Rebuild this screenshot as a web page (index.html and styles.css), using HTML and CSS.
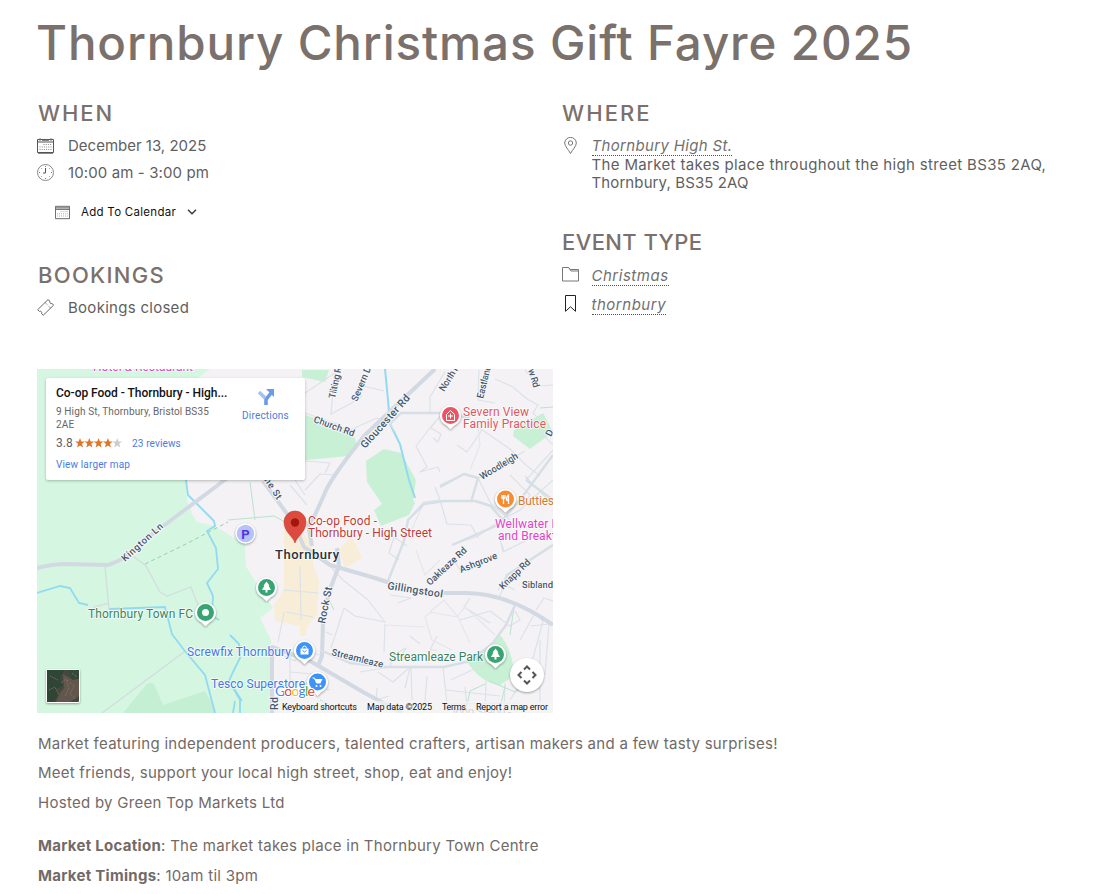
FILE: index.html
```html
<!DOCTYPE html>
<html lang="en">
<head>
<meta charset="utf-8">
<title>Thornbury Christmas Gift Fayre 2025</title>
<link rel="stylesheet" href="styles.css">
</head>
<body>
<main class="event">
  <h1 class="event-title"><span>Thornbury Christmas Gift Fayre 2025</span></h1>
  <div class="event-meta">
    <div class="col">
      <section class="block block-when">
        <h3 class="heading h-when">When</h3>
        <div class="row"><svg class="icon" viewBox="0 0 17 17"><path d="M.5 2.5h16v13H.5zM.5 5h16M1 16.2h15" stroke="#555"/><path d="M3 1v3M14 1v3M5 3.4h7" stroke="#777"/><path d="M6.500 7.500h8M2.500 10h12M2.500 12.500h12" stroke="#888" stroke-dasharray="1 1.200"/></svg><span class="t-date">December 13, 2025</span></div>
        <div class="row row-time"><svg class="icon" viewBox="0 0 17 17"><circle cx="8.500" cy="8.500" r="8" stroke="#888"/><path d="M8.500 4v5H6" stroke="#555"/><path d="M8.500 2v1M8.500 14v1M2 8.500h1M14 8.500h1M4 4l.6.6M13 4l-.6.6M4 13l.6-.6M13 13l-.6-.6" stroke="#777"/></svg><span class="t-time">10:00 am - 3:00 pm</span></div>
        <button class="add-cal"><svg class="icon-sm" viewBox="0 0 17 17"><path d="M.5 1.500h16v14H.5zM.5 5h16" stroke="#555"/><path d="M1 3.200h15" stroke="#999" stroke-width="2"/><path d="M6.500 7.500h8M2.500 10h12M2.500 12.500h12" stroke="#999" stroke-dasharray="1 1.200"/></svg><span class="t-cal">Add To Calendar</span><svg class="chev" viewBox="0 0 10 6"><path d="M1 .8l4 4 4-4" stroke="#333" stroke-width="1.300"/></svg></button>
      </section>
      <section class="block">
        <h3 class="heading h-book">Bookings</h3>
        <div class="row"><svg class="icon" viewBox="0 0 17 17"><path d="M.7 10.700L11 .6l2 1.700c-.6 1.500.6 2.800 2.200 2.200l1.400 1.700L6.200 16.300l-1.600-1.700c.7-1.500-.6-2.900-2.200-2.200zM8.200 3.600l1 1M12 7.500l1.200 1.200M10 5.500l.7.7" stroke="#666"/></svg><span class="t-closed">Bookings closed</span></div>
      </section>
    </div>
    <div class="col col-right">
      <section class="block block-where">
        <h3 class="heading h-where">Where</h3>
        <div class="row row-where"><svg class="icon" viewBox="0 0 17 17"><path d="M8.500 16.500C6.500 12.500 2.700 9.500 2.700 6a5.800 5.600 0 0 1 11.600 0c0 3.500-3.800 6.500-5.800 10.500z" stroke="#777"/><circle cx="8.500" cy="6" r="2.200" stroke="#777"/></svg>
          <div><a class="link t-high">Thornbury High St.</a><br><span class="t-addr">The Market takes place throughout the high street BS35 2AQ,</span><br><span class="t-addr2">Thornbury, BS35 2AQ</span></div></div>
      </section>
      <section class="block">
        <h3 class="heading h-type">Event Type</h3>
        <div class="row row-folder"><svg class="icon icon-folder" viewBox="0 0 17 17"><path d="M.5 1.500h6l2 2h8v11.500H.5zM6.500 1.500l2.500 3.500h7.500" stroke="#777"/></svg><a class="link t-xmas">Christmas</a></div>
        <div class="row row-tag"><svg class="icon" viewBox="0 0 17 17"><path d="M3.500.5h10v15.800l-5-4.500-5 4.500z" stroke="#222"/></svg><a class="link t-thorn">thornbury</a></div>
      </section>
    </div>
  </div>

  <div class="map">
    <svg class="map-svg" viewBox="37 369 516 344">
      <rect x="37" y="369" width="516" height="344" fill="#f4f2f4"/>
      <!-- green land -->
      <path fill="#d5f7e1" d="M37 369H210L195 380V470H186L187 500L193 516L197 522L215 526L245 545L246 567L263 593L273 608L260 618L271 640V713H37z"/>
      <path fill="#c4efd3" d="M123 713L147 684Q151 682 154 684L163 705L205 691L217 713z"/>
      <path fill="#c8f0d5" d="M302 370H329L325 382L302 377zM302 414L352 430L358 448L348 456L307 460H302zM366 461L384 449L401 453L416 480L413 500L415 503L409 515L381 526L374 510L382 504L367 482zM514 430L543 413L553 432L530 449L513 436zM466 660Q484 651 500 635Q513 650 514 676L500 685Q480 683 466 660z"/>
      <g fill="#f8edd7"><path d="M284 530L300 528L312 545L313 566L319 580L317 615L308 625L305 636H300V626L275 621L274 605L284 590z"/><path d="M339 550L352 536L362 558L345 568z"/></g>
      <!-- streams -->
      <g class="water"><path d="M186 480L188 495L214 521L215 526L207 531L216 548L218 569L207 583L213 596L212 616L219 620M37 593L60 586L70 588L79 603L88 605M109 609L165 607L172 634L184 650L205 675L215 713M230 635L239 644L240 658L233 672L229 681L240 700V713M229 681L242 701M233 713L235 701"/><path stroke-width="2" d="M385 369L388 400L390 424L400 444L409 480L415 498"/></g>
      <!-- minor roads -->
      <g class="minor"><path d="M105 567L109 609M133 556L146 566L160 592L167 596L191 587L200 610M109 603L94 607L92 617L102 615M102 713L184 652"/></g>
      <g class="lane">
        <path d="M305 393L335 373M335 370L331 414L350 404L362 396M331 415L332 402M305 413L340 425M350 430L377 418L390 424L396 433M359 385L384 391M305 461L330 463L325 473M305 490L320 474L334 475M305 495L295 480M290 485L307 505"/>
        <path d="M430 412V397L445 372M401 413L443 413L430 428L416 446L427 467L420 472L438 467L440 472M431 428L441 434L438 442L433 438M457 445L467 452L482 430M478 427L510 449L526 465L540 476M479 370L478 400L495 403M495 379L513 387L527 399L538 405L533 413L545 425L542 434L553 445M525 370L539 386L553 385M440 485L464 474L478 478L525 451M478 478L471 502M478 478L491 504L510 520M440 500L435 487M440 500L447 524L471 525L478 538"/>
        <path d="M452 545L478 536L498 522L520 510L553 480M499 534L503 552L533 537M454 561L460 570M478 501L489 505L502 520L510 525M498 590L507 575L543 551L553 545M499 597L505 585L515 590M500 540L504 551M526 480L553 450M510 475L530 495L525 503"/>
        <path d="M388 581L404 541L408 520L424 502L440 500M330 566L343 580L368 600L385 622L355 616L344 608L331 648M332 635L326 632M360 672L390 667L393 655L406 648L400 658M378 672L393 682L410 667M410 668L405 688M411 667L412 700M384 652L385 624M437 636L430 650L437 650M443 667L448 713M446 690L500 696M448 704L520 703M460 620L490 611L510 626L520 620L515 611M470 598L464 607L490 623"/>
        <path d="M390 595L411 598L398 603M407 546L394 537L389 553L399 560M275 652L295 661L300 652M290 655V680L330 690M290 672L313 674M300 650L320 655M377 688L376 700L389 696M300 566L301 620M283 590L319 593M286 612L313 617M284 612L278 642M410 636L420 644"/>
        <path d="M520 640L535 613L543 621L528 677L540 690M530 626L549 624L545 675M536 610L544 598L553 601M524 678L510 700M540 705V640M451 680L470 671L487 663M427 676L424 713M465 687L467 710M486 681L485 713M505 683L504 713"/>
      </g>
      <g class="faint"><path d="M424 502L409 536L402 531M425 617L432 640L452 650M430 612L444 600L458 617L470 643M457 617L465 607L495 635M425 617Q430 610 440 614L458 617M385 625L425 627M440 560L425 575L416 550M478 427L480 445L470 470"/></g>
      <g class="path"><path d="M228 520L274 516L289 524M255 520L250 482M330 602L334 610M320 700L335 707L350 713M514 607L510 635M485 684L470 691L467 705M489 681L515 692L535 679M505 686L499 713M525 476L553 505M540 408L553 407"/></g>
      <path d="M145 564L186 544L228 522" stroke="#9ccdb0" fill="none" stroke-dasharray="4 3"/>
      <!-- main roads -->
      <g class="main"><path d="M37 568Q52 564 66 564L108 565Q130 558 150 536L174 518L222 482L240 469"/><path d="M435 369L365 435Q329 480 324 495L315 515L308 525L312 546"/><path d="M263 481L293 522L304 547L330 565L375 578L420 593H467Q510 594 553 625"/><path d="M337 548L339 566L329 592L323 622L322 656L318 666"/><path d="M272 713V647L310 661L363 692L402 713"/></g>
      <g class="mid"><path d="M320 650L350 663L385 667H444L470 661L492 644L506 625L515 605"/><path d="M390 424L401 413H443L470 418M388 581L404 541L408 520L424 504L444 501H475L491 506L503 520M553 455L520 500L498 525L452 545M502 590L507 575L553 545M526 480L553 500M440 487L464 474L478 478L471 502"/></g>
      <!-- road names -->
      <g class="road">
        <text transform="translate(125 562) rotate(-42)" textLength="52">Kington Ln</text>
        <text transform="translate(264 480) rotate(57)" textLength="24">ne St</text>
        <text transform="translate(335 399) rotate(-78)" textLength="32">Tilting R</text>
        <text transform="translate(357 402) rotate(-67)" textLength="39">Severn D.</text>
        <text transform="translate(313 422) rotate(20)" textLength="43">Church Rd</text>
        <text class="big" transform="translate(365 449) rotate(-48)" textLength="68">Gloucester Rd</text>
        <text transform="translate(444 392) rotate(-58)" textLength="30">North R</text>
        <text transform="translate(483 399) rotate(-76)" textLength="34">Eastland</text>
        <text transform="translate(528 370) rotate(73)" textLength="19">w Rd</text>
        <text transform="translate(482 480) rotate(-31)" textLength="43">Woodleigh</text>
        <text transform="translate(430 586) rotate(-43)" textLength="51">Oakleaze Rd</text>
        <text transform="translate(461 573) rotate(-22)" textLength="40">Ashgrove</text>
        <text transform="translate(503 590) rotate(-44)" textLength="39">Knapp Rd</text>
        <text x="522" y="588" textLength="31">Sibland</text>
        <text class="big" transform="translate(387 589) rotate(9)" textLength="56">Gillingstool</text>
        <text class="big" transform="translate(325 624) rotate(-79)" textLength="37">Rock St</text>
        <text transform="translate(331 655) rotate(14)" textLength="53">Streamleaze</text>
        <text class="big" transform="translate(278 710) rotate(-90)" textLength="13">Rd</text>
        <text transform="translate(551 437) rotate(-65)">D</text>
      </g>
      <!-- place names -->
      <g class="place">
        <text x="275" y="559" class="town" textLength="64">Thornbury</text>
        <g fill="#bd3a37"><text x="308" y="524.500" textLength="69">Co-op Food -</text><text x="308" y="536.500" textLength="124">Thornbury - High Street</text></g>
        <g fill="#e2575f"><text x="463" y="415.500" textLength="66">Severn View</text><text x="463" y="427.500" textLength="83">Family Practice</text></g>
        <g fill="#e243c8"><text x="495" y="528" textLength="64">Wellwater B</text><text x="498" y="540" textLength="58">and Breakf</text><text x="93" y="371" textLength="100">Hotel &amp; Restaurant</text></g>
        <text x="518" y="505" fill="#d47a31" textLength="36">Butties</text>
        <g fill="#38835f"><text x="88" y="618" textLength="105">Thornbury Town FC</text><text x="389" y="661" textLength="94">Streamleaze Park</text></g>
        <g fill="#4278e5"><text x="187" y="656" textLength="104">Screwfix Thornbury</text><text x="211" y="688" textLength="94">Tesco Superstore</text></g>
        <text x="449" y="716" fill="#9a9da4" textLength="62">John Stapp -</text>
      </g>
      <!-- pins -->
      <defs><path id="pin" d="M0 14L-4 10A10.500 10.500 0 1 1 4 10z"/></defs>
      <g class="pins">
        <circle cx="245.500" cy="533.500" r="9.500" fill="#b6c3fb"/>
        <g transform="translate(450.500 415.500)"><use href="#pin"/><circle r="8.500" fill="#ed5463"/><path d="M-4-1L0-5L4-1V5H-4zM0-2V3M-2.500.5H2.500" stroke="#fff" fill="none"/></g>
        <g transform="translate(505.500 499)"><use href="#pin"/><circle r="8.500" fill="#f98b2f"/><path d="M-3.500-4v3h3v-3M-2-4V5M3 5V-4Q1-3 1 1H3" stroke="#fff" fill="none" stroke-width="1.300"/></g>
        <g transform="translate(266.500 587.500)"><use href="#pin"/><circle r="8.500" fill="#36a473"/><path d="M0-6L3-2H2L4.500 2.500H1V5H-1V2.500H-4.500L-2-2H-3z" fill="#fff"/></g>
        <g transform="translate(205.500 612.500)"><use href="#pin"/><circle r="8.500" fill="#36a473"/><circle r="3.500" fill="#fff"/></g>
        <g transform="translate(495.500 654.500)"><use href="#pin"/><circle r="8.500" fill="#36a473"/><path d="M0-6L3-2H2L4.500 2.500H1V5H-1V2.500H-4.500L-2-2H-3z" fill="#fff"/></g>
        <g transform="translate(304.500 650.500)"><use href="#pin"/><circle r="8.500" fill="#3d93fa"/><path d="M-4-2H4V4H-4z" fill="#fff"/><path d="M-2-2a2 2.500 0 0 1 4 0" fill="none" stroke="#fff"/><path d="M-2 0Q0 3 2 0" fill="none" stroke="#3d93fa"/></g>
        <g transform="translate(317.500 682)"><use href="#pin"/><circle r="8.500" fill="#3d93fa"/><path d="M-5-4h2l2 5h4" stroke="#fff" fill="none"/><path d="M-3-3H5L3 1H-1z" fill="#fff"/><circle cx="-1" cy="4" r="1" fill="#fff"/><circle cx="3" cy="4" r="1" fill="#fff"/></g>
      </g>
      <text x="245.500" y="538.500" class="parking">P</text>
      <path d="M295 543C293 536 284 532 284 522a11 11 0 0 1 22 0c0 10-9 14-11 21z" fill="#dd4b3e" stroke="#c23c32" stroke-width=".6"/><circle cx="295" cy="522.500" r="4.200" fill="#a3160f"/>
      <text class="google" x="275" y="695.500" textLength="40"><tspan fill="#4285f4">G</tspan><tspan fill="#ea4335">o</tspan><tspan fill="#fbbc05">o</tspan><tspan fill="#4285f4">g</tspan><tspan fill="#34a853">l</tspan><tspan fill="#ea4335">e</tspan></text>
      <rect x="280" y="701" width="273" height="12" fill="#f5f5f5" opacity=".65"/>
      <g class="legal"><text x="282" y="710" textLength="75">Keyboard shortcuts</text><text x="367" y="710" textLength="65">Map data ©2025</text><text x="442" y="710" textLength="24">Terms</text><text x="476" y="710" textLength="72">Report a map error</text></g>
      <!-- satellite toggle -->
      <g class="shadow"><rect x="46" y="669" width="34" height="34" rx="2" fill="#fff"/></g>
      <rect x="47" y="670" width="32" height="32" rx="1" fill="#46483f"/>
      <path d="M47 670h17l-4 8 3 8-7 3 2 6-4 7h-7z" fill="#2f4535"/><path d="M63 674l8 5 8-3v20l-9 6H56l4-9 4-5z" fill="#62564d"/><path d="M68 670h11v9l-7 1z" fill="#35493a"/><path d="M61 683l5-4 3 9-4 8M67 680l7 6-4 8 6 5M50 676l8 4M49 690l6-3 4 8M72 673l5 4" stroke="#85786c" fill="none" stroke-dasharray="1 1"/>
      <g class="shadow"><circle cx="527" cy="675" r="17" fill="#fff"/></g>
      <path d="M524 669.500l3-3 3 3M524 680.500l3 3 3-3M521.500 672l-3 3 3 3M532.500 672l3 3-3 3" stroke="#555" stroke-width="2" fill="none"/>
    </svg>
    <div class="card">
      <div class="card-info">
        <div class="card-name">Co-op Food - Thornbury - High...</div>
        <div class="card-addr">9 High St, Thornbury, Bristol BS35<br>2AE</div>
        <div class="card-rating"><span class="score">3.8</span><svg class="stars" viewBox="0 0 47 10"><defs><path id="star" d="M5 0l1.300 3.500 3.500.1-2.800 2.200 1 3.600L5 7.400 2 9.400l1-3.600L.2 3.600l3.500-.1z"/></defs><g fill="#e27426"><use href="#star"/><use href="#star" x="9.300"/><use href="#star" x="18.600"/><use href="#star" x="27.900"/></g><use href="#star" x="37.200" fill="#ccc"/></svg><a class="reviews">23 reviews</a></div>
        <a class="larger">View larger map</a>
      </div>
      <div class="card-dir"><svg class="dir-icon" viewBox="0 0 16 17"><path d="M1 4l6 6" stroke="#a6c1f3" stroke-width="3.500"/><path d="M8 17V11.500L13 5" stroke="#6a9ae9" stroke-width="3.600"/><path d="M8 1h8v8z" fill="#6a9ae9"/></svg><a>Directions</a></div>
    </div>
  </div>

  <div class="description">
    <p><span class="d1">Market featuring independent producers, talented crafters, artisan makers and a few tasty surprises!</span><br><span class="d2">Meet friends, support your local high street, shop, eat and enjoy!</span><br><span class="d3">Hosted by Green Top Markets Ltd</span></p>
    <p><span class="d4"><b>Market Location</b>: The market takes place in Thornbury Town Centre</span><br><span class="d5"><b>Market Timings</b>: 10am til 3pm</span></p>
  </div>
</main>
</body>
</html>
```
FILE: styles.css
```css
* { box-sizing: border-box; }
body { margin: 0; background: #fff; color: #5f5f5f; font: 400 15px/18px Inter, sans-serif; letter-spacing: .28px; overflow: hidden; }
svg { display: block; fill: none; }
.event { width: 1099px; height: 894px; padding: 0 37px; }
.event-title { margin: 0; padding-top: 15px; height: 98px; font-size: 47.5px; line-height: 56px; font-weight: 500; color: #7a706c; letter-spacing: .88px; white-space: nowrap; }
.event-title span { margin-left: -1px; }
.event-meta { display: grid; grid-template-columns: 524px 1fr; height: 271px; }
.heading { margin: 0; padding-left: 1px; height: 34px; font-size: 22px; line-height: 30px; font-weight: 500; color: #7a706c; text-transform: uppercase; letter-spacing: 1px; }
.h-when { letter-spacing: 1.9px; }
.h-where { letter-spacing: 2.1px; }
.h-book { letter-spacing: 1.3px; }
.h-type { letter-spacing: .4px; }
.t-date { letter-spacing: 0; }
.t-time, .t-addr2 { letter-spacing: .11px; }
.t-addr, .t-high { letter-spacing: .34px; }
.t-xmas, .t-thorn { letter-spacing: .52px; }
.t-cal { letter-spacing: .28px; }
.block-when { height: 162px; }
.block-where { height: 129px; }
.row { display: flex; align-items: flex-start; gap: 14px; height: 27px; padding-top: 5px; white-space: nowrap; }
.row .icon { flex: none; width: 17px; height: 17px; }
.col-right .row { padding-left: 1px; gap: 12.5px; }
.row-where { line-height: 18.5px; }
.row-time { height: 38px; }
.row-folder { padding-top: 6px; }
.row-folder .icon { margin-top: -1px; }
.row-tag { margin-top: 2px; padding-top: 6px; }
.row-tag .icon { margin-top: -1px; }
.icon { stroke-width: 1; }
.add-cal { display: flex; align-items: center; height: 30px; padding: 0; margin-left: 18px; border: 0; background: none; color: #111; font: 11.5px Inter, sans-serif; }
.icon-sm { width: 15px; height: 15px; margin-right: 11px; }
.chev { width: 10px; height: 6px; margin-left: 11px; }
.link { font-style: italic; border-bottom: 1px dotted #555; color: #707070; line-height: 18px; }
.map { position: relative; width: 516px; height: 344px; overflow: hidden; font-family: Roboto, sans-serif; font-weight: 400; letter-spacing: 0; }
.map-svg { width: 516px; height: 344px; }
.water { stroke: #92daf0; stroke-width: 1.8; }
.lane { stroke: #dbe2e8; stroke-width: 1.2; stroke-linejoin: round; }
.faint { stroke: #e4e7ea; stroke-width: 1.2; }
.mid { stroke: #d6dee6; stroke-width: 2.4; stroke-linejoin: round; }
.minor { stroke: #d4dcdf; stroke-width: 1.3; }
.main { stroke: #d2d9e2; stroke-width: 4; stroke-linejoin: round; }
.path { stroke: #b9e3cd; stroke-width: 1; }
.road { fill: #46566c; font-size: 9.5px; font-weight: 500; stroke: #f6f6f8; stroke-width: 2px; paint-order: stroke; }
.road .big { font-size: 10.5px; }
.place { font-size: 12px; stroke: #fff; stroke-width: 1.6px; stroke-opacity: .8; paint-order: stroke; }
.place .town { font-size: 13px; font-weight: 500; fill: #28303c; }
.pins use { fill: #fff; }
.pins circle:first-child { stroke: #fff; stroke-width: 1.5; }
.pins > *, .shadow { filter: drop-shadow(0 1px 1px rgba(0, 0, 0, .35)); }
.parking { font-size: 13px; font-weight: 700; fill: #5035e0; text-anchor: middle; }
.google { font: 14px Lato, sans-serif; stroke: #fff; stroke-width: 2px; paint-order: stroke; }
.legal { fill: #111; font-size: 9px; }
.card { position: absolute; left: 9px; top: 9px; width: 259px; height: 102px; padding: 6px 10px; display: flex; background: #fff; border-radius: 2px; box-shadow: 0 1px 3px rgba(0, 0, 0, .25); white-space: nowrap; }
.card-info { width: 186px; }
.card-name { height: 21px; color: #111; font-size: 12px; line-height: 18px; font-weight: 500; letter-spacing: -.03px; }
.card-addr { font-size: 10px; line-height: 13px; color: #666; letter-spacing: .13px; }
.card-rating { display: flex; align-items: center; height: 23px; }
.score { font-size: 12px; width: 19px; }
.stars { width: 47px; height: 10px; }
.card a { color: #4a7be5; font-size: 10px; letter-spacing: .14px; }
.card .reviews { margin-left: 10px; padding-top: 2px; }
.card .larger { display: block; line-height: 22px; }
.card-dir { display: flex; flex-direction: column; }
.dir-icon { width: 16px; height: 17px; margin: 4px 0 2px 16px; }
.card .card-dir a { letter-spacing: .2px; }
.description { padding: 16px 1px 0; color: #726a66; line-height: 29.4px; white-space: nowrap; }
.description p { margin: 0 0 14px; }
.description b { font-weight: 700; }
.d2 { letter-spacing: .24px; }
```
